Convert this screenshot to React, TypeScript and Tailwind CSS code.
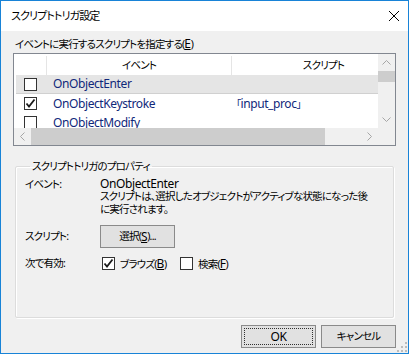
import React from "react";

const font = "font-['Noto_Sans','Noto_Sans_CJK_JP',sans-serif] [font-feature-settings:'palt']";
// latin runs need a bigger size than the kana to match the dialog font
const en = "text-[12px] tracking-[-0.4px]";

const CheckBox = ({ checked = false }: { checked?: boolean }) => (
    <div className="w-[13px] h-[13px] shrink-0 border border-[#333333] bg-white flex items-center justify-center">
        {checked && (
            <svg width="11" height="11" viewBox="0 0 11 11">
                <path d="M1.5 5.5 L4 8.5 L9.5 1.5" fill="none" stroke="#1a1a1a" strokeWidth="1.8" />
            </svg>
        )}
    </div>
);

const Chevron = ({ dir }: { dir: "up" | "down" | "left" | "right" }) => {
    const d = {
        up: "M4.5 10.5 L8.5 6.5 L12.5 10.5",
        down: "M4.5 6.5 L8.5 10.5 L12.5 6.5",
        left: "M10.5 4.5 L6.5 8.5 L10.5 12.5",
        right: "M6.5 4.5 L10.5 8.5 L6.5 12.5",
    }[dir];
    return (
        <svg width="17" height="17" viewBox="0 0 17 17" className="shrink-0">
            <path d={d} fill="none" stroke="#a6a6a6" strokeWidth="1" />
        </svg>
    );
};

const Key = ({ k }: { k: string }) => <span className={`${en} underline`}>{k}</span>;

const Button = ({ children, focused = false }: { children: React.ReactNode; focused?: boolean }) => (
    <div className="w-[75px] h-[23px] border border-[#8a8a8a] bg-[#e1e1e1] p-[2px] shrink-0">
        <div
            className={`w-full h-full flex items-center justify-center leading-none whitespace-nowrap ${
                focused ? "border border-dotted border-[#303030]" : ""
            }`}
        >
            {children}
        </div>
    </div>
);

const rows = [
    { name: "OnObjectEnter", script: "", checked: false, hot: true },
    { name: "OnObjectKeystroke", script: "input_proc", checked: true, hot: false },
    { name: "OnObjectModify", script: "", checked: false, hot: false },
];

const ListBox = () => (
    <div className="h-[93px] border border-[#828790] bg-white flex flex-col">
        <div className="flex h-[74px]">
            <div className="w-[364px] overflow-hidden flex flex-col">
                <div className="flex h-[21px] shrink-0 w-[401px] pt-[2px]">
                    <div className="w-[33px] shrink-0 border-r border-[#e5e5e5]" />
                    <div className="w-[185px] shrink-0 border-r border-[#e5e5e5] flex items-center justify-center">
                        イベント
                    </div>
                    <div className="w-[183px] shrink-0 flex items-center justify-center">スクリプト</div>
                </div>
                {rows.map((row) => (
                    <div
                        key={row.name}
                        className={`flex h-[19px] shrink-0 w-[401px] items-center text-[#10287a] ${
                            row.hot ? "ml-[2px] bg-[#e5e5e5] border-b border-[#d0d0d0]" : ""
                        }`}
                    >
                        <div className={`${row.hot ? "w-[31px] pl-[8px]" : "w-[33px] pl-[10px]"} shrink-0 flex`}>
                            <CheckBox checked={row.checked} />
                        </div>
                        <div className={`${en} w-[185px] shrink-0 pl-[6px] whitespace-nowrap`}>{row.name}</div>
                        <div className="w-[183px] shrink-0 pl-[4px] whitespace-nowrap">
                            {row.script && (
                                <>
                                    「<span className={en}>{row.script}</span>」
                                </>
                            )}
                        </div>
                    </div>
                ))}
            </div>
            <div className="w-[17px] flex flex-col bg-[#f0f0f0]">
                <Chevron dir="up" />
                <div className="h-[11px] bg-[#cdcdcd]" />
                <div className="flex-1" />
                <Chevron dir="down" />
            </div>
        </div>
        <div className="flex h-[17px]">
            <div className="w-[364px] flex bg-[#f0f0f0]">
                <Chevron dir="left" />
                <div className="w-[294px] bg-[#cdcdcd]" />
                <div className="flex-1" />
                <Chevron dir="right" />
            </div>
            <div className="w-[17px] bg-[#f0f0f0]" />
        </div>
    </div>
);

const App = () => {
    return (
        <div
            className={`${font} relative w-[409px] h-[354px] border border-[#1883d7] bg-[#f0f0f0] flex flex-col text-[10.5px] text-black tracking-[-0.8px]`}
        >
            <div className="h-[30px] shrink-0 bg-white flex items-center justify-between pl-[10px] pr-[9px]">
                <span className="text-[11px] tracking-[-0.9px]">スクリプトトリガ設定</span>
                <svg width="10" height="10" viewBox="0 0 10 10">
                    <path d="M0 0 L10 10 M10 0 L0 10" stroke="#000" strokeWidth="1" />
                </svg>
            </div>

            <div className="flex-1 flex flex-col px-[12px]">
                <div className="pt-[6px] pb-[2px] pl-[2px] leading-[14px] whitespace-nowrap">
                    イベントに実行するスクリプトを指定する(<Key k="E" />)
                </div>

                <ListBox />

                <fieldset className="mt-[13px] mx-[2px] h-[159px] border border-[#dcdcdc] rounded-[2px] shadow-[1px_1px_0_#ffffff,inset_1px_1px_0_#ffffff] pl-[9px]">
                    <legend className="ml-[5px] px-[2px] leading-[14px]">スクリプトトリガのプロパティ</legend>

                    <div className="mt-[4px] flex leading-[12.5px]">
                        <div className="w-[75px] shrink-0 pt-[1px]">イベント:</div>
                        <div className="flex flex-col whitespace-nowrap">
                            <span className={`${en} leading-[13px]`}>OnObjectEnter</span>
                            <span>スクリプトは、選択したオブジェクトがアクティブな状態になった後</span>
                            <span>に実行されます。</span>
                        </div>
                    </div>

                    <div className="mt-[10px] flex items-center">
                        <div className="w-[75px] shrink-0">スクリプト:</div>
                        <Button>
                            選択(<Key k="S" />)...
                        </Button>
                    </div>

                    <div className="mt-[9px] flex items-center h-[13px]">
                        <div className="w-[77px] shrink-0">次で有効:</div>
                        <CheckBox checked />
                        <span className="ml-[5px] w-[60px] whitespace-nowrap">
                            ブラウズ(<Key k="B" />)
                        </span>
                        <CheckBox />
                        <span className="ml-[5px] whitespace-nowrap">
                            検索(<Key k="F" />)
                        </span>
                    </div>
                </fieldset>

                <div className="mt-[7px] flex justify-end gap-[5px]">
                    <Button focused>
                        <span className={en}>OK</span>
                    </Button>
                    <Button>キャンセル</Button>
                </div>
            </div>

            <svg width="11" height="11" viewBox="0 0 11 11" className="absolute right-[1px] bottom-[1px]">
                {[
                    [9, 1],
                    [9, 5],
                    [5, 5],
                    [9, 9],
                    [5, 9],
                    [1, 9],
                ].map(([x, y]) => (
                    <rect key={`${x}-${y}`} x={x} y={y} width="2" height="2" fill="#bcbcbc" />
                ))}
            </svg>
        </div>
    );
};

export default App;
